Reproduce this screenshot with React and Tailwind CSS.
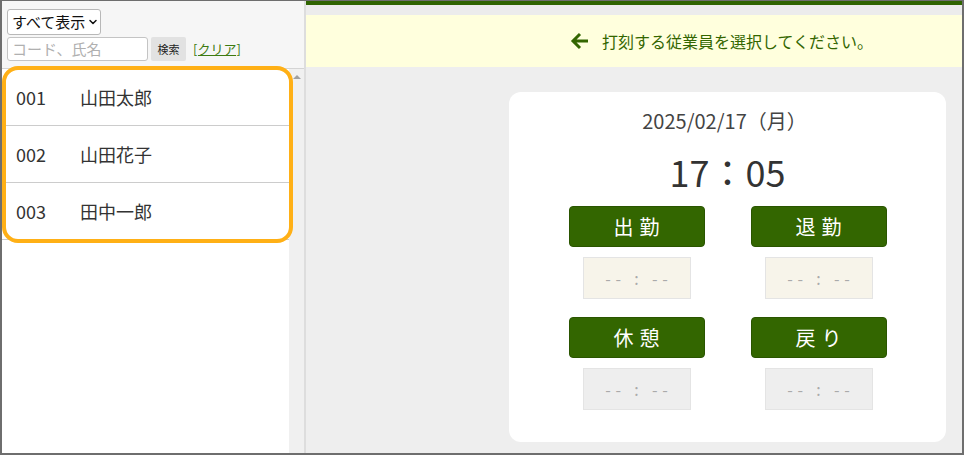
import { ChevronDown } from "lucide-react"

const employees = [
  { code: "001", name: "山田太郎" },
  { code: "002", name: "山田花子" },
  { code: "003", name: "田中一郎" },
]

const font = { fontFamily: '"Noto Sans CJK JP", "Noto Sans", sans-serif' }

function StampButton({ label, bg }) {
  return (
    <div className="flex flex-col items-center">
      <button className="w-[136px] h-[41px] rounded-[4px] bg-[#336600] border border-[#2a5500] text-white text-[20px] tracking-[0.3em] pl-[0.3em] leading-none">
        {label}
      </button>
      <div className={`mt-[10px] w-[108px] h-[42px] ${bg} border border-[#e4e4e4] flex items-center justify-center text-[#aaaaaa] text-[16px] tracking-[0.3em] pl-[0.3em] whitespace-pre`}>
        {"-- : --"}
      </div>
    </div>
  )
}

export default function App() {
  return (
    <div className="w-[964px] h-[455px] border-2 border-t border-[#6e6e6e] flex bg-[#eeeeee] overflow-hidden" style={font}>

      {/* left panel */}
      <div className="w-[304px] flex flex-col border-r-2 border-[#dddddd]">
        <div className="h-[68px] bg-[#f6f6f6] border-b border-[#d4d4d4] px-[5px] pt-[8px]">
          <div className="w-[94px] h-[26px] bg-white border border-[#b8b8b8] rounded-[3px] flex items-center pl-[4px] gap-[2px] text-[15px] text-[#111] whitespace-nowrap">
            すべて表示
            <ChevronDown size={12} strokeWidth={3} />
          </div>
          <div className="flex items-center mt-[2px]">
            <div className="w-[141px] h-[24px] bg-white border border-[#c4c4c4] rounded-[3px] pl-[4px] text-[15px] text-[#b0b0b0] leading-[22px] whitespace-nowrap">
              コード、氏名
            </div>
            <div className="ml-[3px] w-[35px] h-[24px] bg-[#e2e2e2] rounded-[2px] flex items-center justify-center text-[11px] text-[#222]">
              検索
            </div>
            <span className="ml-[7px] text-[13px] text-[#3d7a10] underline">[クリア]</span>
          </div>
        </div>

        <div className="flex-1 flex">
          <div className="flex-1 bg-white relative">
            {employees.map((e) => (
              <div key={e.code} className="h-[57px] border-b border-[#cccccc] flex items-center pl-[14px] text-[18px] text-[#333]">
                <span className="w-[64px]">{e.code}</span>
                <span>{e.name}</span>
              </div>
            ))}
            {/* highlight */}
            <div className="absolute left-0 top-[-3px] w-[291px] h-[177px] border-[4px] border-[#ffb016] rounded-[16px]" />
          </div>
          <div className="w-[15px] bg-[#f0f0f0] flex justify-center pt-[6px]">
            <div className="w-0 h-0 border-l-[4px] border-r-[4px] border-b-[4px] border-l-transparent border-r-transparent border-b-[#a0a0a0]" />
          </div>
        </div>
      </div>

      {/* right panel */}
      <div className="flex-1 flex flex-col">
        <div className="h-[4px] bg-[#2f6400]" />
        <div className="h-[10px] bg-[#ececec]" />
        <div className="h-[52px] bg-[#ffffdd] flex items-center pl-[264px] text-[#336600] text-[16px]">
          <svg width="20" height="18" viewBox="0 0 20 18" className="mr-[12px]">
            <path d="M18 9H4M10 2L3 9l7 7" fill="none" stroke="#336600" strokeWidth="3" />
          </svg>
          打刻する従業員を選択してください。
        </div>

        <div className="flex-1 pt-[25px] pl-[203px]">
          <div className="w-[437px] h-[350px] bg-white rounded-[12px] flex flex-col items-center pt-[14px]">
            <div className="text-[20px] text-[#444] leading-[30px] pr-[6px]">2025/02/17（月）</div>
            <div className="text-[36px] text-[#333] leading-[44px] mt-[13px]">17：05</div>
            <div className="grid grid-cols-2 gap-x-[46px] gap-y-[18px] mt-[13px]">
              <StampButton label="出勤" bg="bg-[#f7f4ea]" />
              <StampButton label="退勤" bg="bg-[#f7f4ea]" />
              <StampButton label="休憩" bg="bg-[#eeeeee]" />
              <StampButton label="戻り" bg="bg-[#eeeeee]" />
            </div>
          </div>
        </div>
      </div>
    </div>
  )
}
